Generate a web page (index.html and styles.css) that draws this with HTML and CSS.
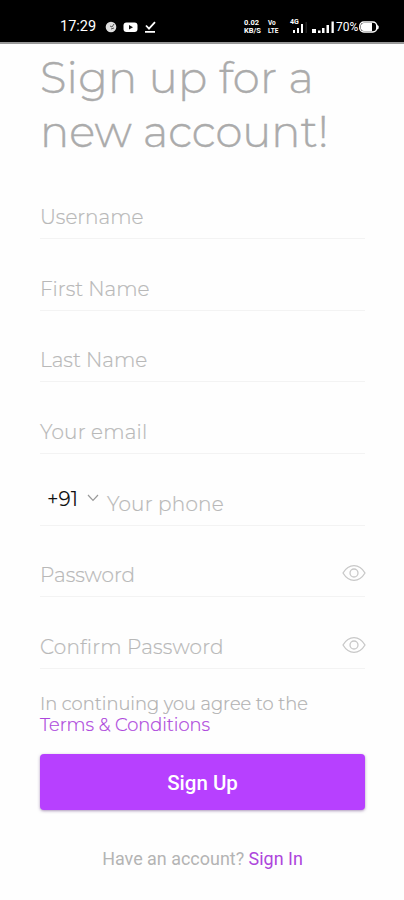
FILE: index.html
```html
<!DOCTYPE html>
<html lang="en">
<head>
<meta charset="utf-8">
<title>Sign up</title>
<link rel="stylesheet" href="styles.css">
</head>
<body>
<header class="status">
  <span class="time">17:29</span>
  <svg class="notices" width="52" height="14" viewBox="0 0 52 14">
    <circle cx="6" cy="7" r="5.3" fill="#ddd"/>
    <path d="M5 6l2 1 2-3M6 9l3-1" fill="none" stroke="#555" stroke-width="1"/>
    <rect x="18.500" y="2.500" width="14" height="9.500" rx="3" fill="#fff"/>
    <path d="M24 5l4 2.200-4 2.200z" fill="#111"/>
    <path d="M41 5.500l3 3.200 6-6.500M40 11.800h10" fill="none" stroke="#fff" stroke-width="1.800"/>
  </svg>
  <span class="rate"><span>0.02</span><span>KB/S</span></span>
  <span class="volte"><span>Vo</span><span>LTE</span></span>
  <span class="net">4G</span>
  <svg class="signal" width="46" height="14" viewBox="0 0 46 14" fill="#fff">
    <path d="M3 10h2v3H3zM7 8h2v5H7zM11 4h2v9h-2z"/>
    <path d="M15.500 2h1.500v11h-1.500z" fill="#222"/>
    <path d="M22 9h4v4h-4zM28 10.500h2.500v2.500H28zM32 8h2.500v5H32zM36.500 5h2.500v8h-2.500zM41.500 1.500h2.300V13h-2.300z"/>
  </svg>
  <span class="percent">70%</span>
  <svg class="battery" width="20" height="12" viewBox="0 0 20 12">
    <rect x=".8" y="1" width="17" height="10" rx="4" fill="none" stroke="#fff" stroke-width="1.500"/>
    <path d="M5 2h8v8H5a3 3 0 0 1-3-4 3 3 0 0 1 3-4zM18 4l1.700 1v2.500L18 8.500z" fill="#fff"/>
  </svg>
</header>
<main>
  <h1>Sign up for a<br><span class="second">new account!</span></h1>
  <form>
    <div class="field"><span>Username</span></div>
    <div class="field"><span>First Name</span></div>
    <div class="field"><span>Last Name</span></div>
    <div class="field"><span class="wide">Your email</span></div>
    <div class="field">
      <span class="code">+91</span>
      <svg class="chevron" width="12" height="8" viewBox="0 0 12 8"><path d="M1 1l5 5.300L11 1" fill="none" stroke="#999" stroke-width="1.200"/></svg>
      <span class="wide">Your phone</span>
    </div>
    <div class="field"><span>Password</span>
      <svg class="eye" width="24" height="18" viewBox="0 0 24 18" fill="none" stroke="#c8c8c8" stroke-width="1.300"><path d="M1 9C4 4 8 1.700 12 1.700S20 4 23 9c-3 5-7 7.300-11 7.300S4 14 1 9z"/><circle cx="12" cy="9" r="4"/></svg>
    </div>
    <div class="field"><span class="wide">Confirm Password</span>
      <svg class="eye" width="24" height="18" viewBox="0 0 24 18" fill="none" stroke="#c8c8c8" stroke-width="1.300"><path d="M1 9C4 4 8 1.700 12 1.700S20 4 23 9c-3 5-7 7.300-11 7.300S4 14 1 9z"/><circle cx="12" cy="9" r="4"/></svg>
    </div>
    <p class="terms">In continuing you agree to the<br><a>Terms &amp; Conditions</a></p>
    <button type="button">Sign Up</button>
  </form>
  <p class="login">Have an account? <a>Sign In</a></p>
</main>
</body>
</html>
```
FILE: styles.css
```css
* { box-sizing: border-box; }
body {
  margin: 0;
  height: 900px;
  overflow: hidden;
  background: #fefefe;
  font-family: Montserrat, Inter, sans-serif;
  font-weight: 300;
  white-space: nowrap;
}
.status {
  height: 44px;
  padding: 11px 0 0 60px;
  display: flex;
  align-items: center;
  background: #000;
  border-bottom: 2px solid #999;
  color: #fff;
  font-family: Roboto, sans-serif;
}
.time { width: 45px; font-size: 14.5px; font-weight: 400; }
.notices { flex: none; margin-right: 87px; }
.rate, .volte {
  display: flex;
  flex-direction: column;
  font-size: 7.5px;
  line-height: 8px;
  font-weight: 700;
}
.rate { width: 24px; }
.volte { width: 22px; font-size: 6.5px; }
.net { width: 0; font-size: 7px; font-weight: 700; align-self: flex-start; line-height: 22px; }
.signal { flex: none; }
.percent { width: 23px; font-size: 12px; font-weight: 400; }
.battery { flex: none; }
main { padding: 7px 39px 0 40px; }
h1 {
  margin: 0;
  height: 144px;
  font-size: 43.3px;
  line-height: 53.5px;
  font-weight: 300;
  letter-spacing: .25px;
  color: #ababab;
  -webkit-text-stroke: .4px #ababab;
}
.second { letter-spacing: 0; }
.field {
  height: 71.7px;
  padding-bottom: 10px;
  display: flex;
  align-items: flex-end;
  border-bottom: 1px solid #f3f3f3;
  font-size: 20px;
  line-height: 22px;
  color: #b8b8b8;
  -webkit-text-stroke: .2px #b8b8b8;
}
form .field:first-child { height: 44px; }
.wide { letter-spacing: .2px; }
.code { width: 46px; padding-left: 7px; color: #111; margin-bottom: 5px; font-weight: 400; -webkit-text-stroke: 0; }
.chevron { margin: 0 8px 13px 1px; }
.eye { margin: 0 -1px 4px auto; }
.terms { margin: 23.5px 0 18.5px; font-size: 17.85px; line-height: 21.5px; color: #b0b0b0; -webkit-text-stroke: .2px; }
a { color: #ad45dc; }
button {
  display: block;
  width: 325px;
  height: 56px;
  padding: 2px 0 0;
  border: 0;
  border-radius: 4px;
  background: #b740ff;
  box-shadow: 0 1px 3px rgba(90, 50, 120, .5);
  color: #fff;
  font: 500 20.5px Roboto, sans-serif;
}
.login { margin: 38px 0 0; text-align: center; font: 400 17.95px/22px Roboto, sans-serif; color: #b4b4b4; }
```
